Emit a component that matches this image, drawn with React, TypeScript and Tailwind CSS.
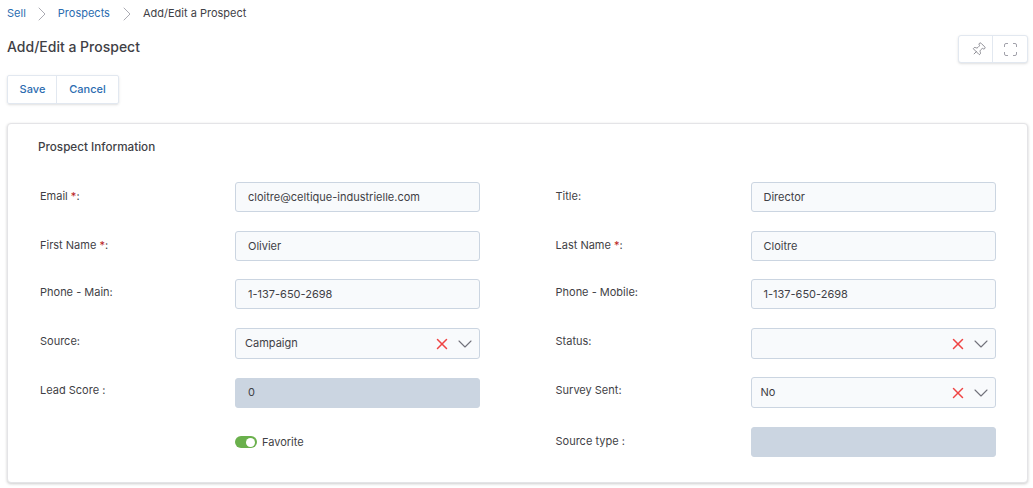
import { ChevronDown, ChevronRight, Pin, X } from 'lucide-react';

function Label({ text, required, tall }: { text: string; required?: boolean; tall?: boolean }) {
  return (
    <div className={`w-[195px] shrink-0 text-[11px] text-[#3f3f46] ${tall ? 'pb-[4px]' : 'pb-[2px]'}`}>
      {text}
      {required && <span className="text-[#b91c1c]"> *</span>}
      {required && ':'}
    </div>
  );
}

function TextInput({ value, disabled }: { value?: string; disabled?: boolean }) {
  return (
    <div
      className={`flex h-[30px] w-[245px] shrink-0 items-center rounded-[3px] border px-[12px] text-[11px] text-[#3f3f46] ${
        disabled ? 'border-[#cbd5e1] bg-[#cbd5e1]' : 'border-[#cbd5e1] bg-[#f8fafc]'
      }`}
    >
      {value}
    </div>
  );
}

function SelectInput({ value }: { value?: string }) {
  return (
    <div className="flex h-[31px] w-[245px] shrink-0 items-center rounded-[3px] border border-[#cbd5e1] bg-[#f8fafc] pl-[9px] pr-[2px] text-[11px] text-[#3f3f46]">
      <span className="flex-1 pb-[1px]">{value}</span>
      <X className="h-[18px] w-[18px] text-[#ef4444]" strokeWidth={2} />
      <ChevronDown className="ml-[2px] h-[24px] w-[24px] text-[#71717a]" strokeWidth={1.1} />
    </div>
  );
}

export default function App() {
  return (
    <div className="h-[488px] w-[1033px] overflow-hidden bg-white font-['Inter',sans-serif]">
      {/* Breadcrumb */}
      <div className="flex h-[27px] items-center pl-[7px] text-[11px]">
        <span className="text-[#2b6cb0]">Sell</span>
        <ChevronRight className="mx-[4px] h-[24px] w-[24px] text-[#a1a1aa]" strokeWidth={0.9} />
        <span className="text-[#2b6cb0]">Prospects</span>
        <ChevronRight className="ml-[5px] mr-[4px] h-[24px] w-[24px] text-[#a1a1aa]" strokeWidth={0.9} />
        <span className="text-[#3f3f46]">Add/Edit a Prospect</span>
      </div>

      {/* Title row */}
      <div className="flex h-[40px] items-start justify-between pl-[7px] pr-[5px]">
        <h1 className="text-[14px] font-medium leading-[39px] text-[#3f3f46]">Add/Edit a Prospect</h1>
        <div className="mt-[8px] flex h-[28px] w-[70px] rounded-[3px] border border-[#e2e8f0] bg-white shadow-sm">
          <div className="flex w-[34px] items-center justify-center border-r border-[#e2e8f0] pl-[6px]">
            <Pin className="h-[15px] w-[15px] rotate-45 text-[#71717a]" strokeWidth={1.2} />
          </div>
          <div className="flex flex-1 items-center justify-center">
            <svg width="13" height="13" viewBox="0 0 13 13" fill="none" stroke="#a1a1aa" strokeWidth="1">
              <path d="M.5 4V2A1.5 1.5 0 0 1 2 .5h2M9 .5h2A1.5 1.5 0 0 1 12.5 2v2M12.5 9v2a1.5 1.5 0 0 1-1.5 1.5H9M4 12.5H2A1.5 1.5 0 0 1 .5 11V9" />
            </svg>
          </div>
        </div>
      </div>

      {/* Actions */}
      <div className="mt-[8px] flex pl-[7px]">
        <div className="flex h-[29px] rounded-[2px] border border-[#e2e8f0] text-[11px] font-medium text-[#2b6cb0] shadow-sm">
          <div className="flex w-[49px] items-center justify-center border-r border-[#e2e8f0] pl-[1px]">Save</div>
          <div className="flex w-[61px] items-center justify-center">Cancel</div>
        </div>
      </div>

      {/* Form card */}
      <div className="ml-[7px] mr-[5px] mt-[19px] h-[360px] rounded-[4px] border border-[#e4e4e7] bg-white pl-[30px] shadow-[0_1px_3px_rgba(0,0,0,0.2)]">
        <h2 className="pt-[15px] text-[11.7px] font-medium leading-[16px] text-[#3f3f46]">Prospect Information</h2>
        <div className="ml-[2px] mt-[27px] flex flex-col">
          <div className="mb-[19px] flex items-center">
            <Label text="Email" required />
            <TextInput value="cloitre@celtique-industrielle.com" />
            <div className="w-[75.5px]" />
            <Label text="Title:" />
            <TextInput value="Director" />
          </div>
          <div className="mb-[18px] flex items-center">
            <Label text="First Name" required />
            <TextInput value="Olivier" />
            <div className="w-[75.5px]" />
            <Label text="Last Name" required />
            <TextInput value="Cloitre" />
          </div>
          <div className="mb-[19px] flex items-center">
            <Label text="Phone - Main:" tall />
            <TextInput value="1-137-650-2698" />
            <div className="w-[75.5px]" />
            <Label text="Phone - Mobile:" tall />
            <TextInput value="1-137-650-2698" />
          </div>
          <div className="mb-[18px] flex items-center">
            <Label text="Source:" tall />
            <SelectInput value="Campaign" />
            <div className="w-[75.5px]" />
            <Label text="Status:" tall />
            <SelectInput />
          </div>
          <div className="mb-[19px] flex items-center">
            <Label text="Lead Score :" tall />
            <TextInput value="0" disabled />
            <div className="w-[75.5px]" />
            <Label text="Survey Sent:" tall />
            <SelectInput value="No" />
          </div>
          <div className="flex items-center">
            <div className="w-[195px] shrink-0" />
            <div className="flex w-[245px] shrink-0 items-center gap-[5px] text-[11px] text-[#3f3f46]">
              <div className="flex h-[12px] w-[22px] items-center justify-end rounded-full bg-[#6ab04c] pr-[2px]">
                <div className="h-[9px] w-[9px] rounded-full bg-white" />
              </div>
              <span>Favorite</span>
            </div>
            <div className="w-[75.5px]" />
            <Label text="Source type :" />
            <TextInput disabled />
          </div>
        </div>
      </div>
    </div>
  );
}
